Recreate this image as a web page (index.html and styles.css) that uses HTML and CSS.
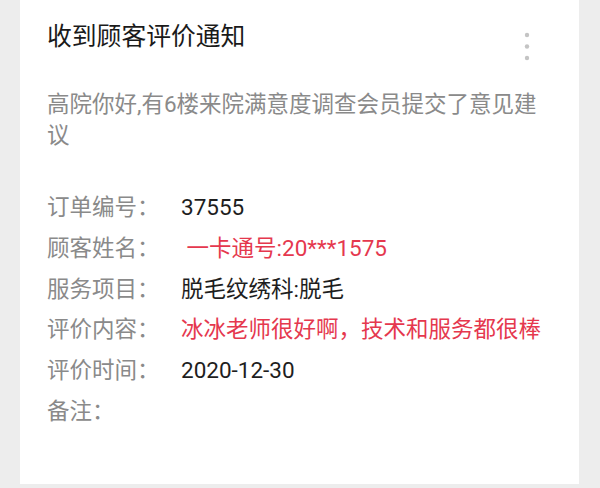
FILE: index.html
```html
<!DOCTYPE html>
<html lang="zh-CN">
<head>
<meta charset="utf-8">
<link rel="stylesheet" href="styles.css">
</head>
<body>
<div class="card">
  <div class="header">
    <div class="title">收到顾客评价通知</div>
    <svg class="more" width="6" height="30" viewBox="0 0 6 30">
      <circle cx="3" cy="3" r="2.2" fill="#c4c4c4"/>
      <circle cx="3" cy="14.5" r="2.2" fill="#c4c4c4"/>
      <circle cx="3" cy="26" r="2.2" fill="#c4c4c4"/>
    </svg>
  </div>
  <p class="desc">高院你好,有6楼来院满意度调查会员提交了意见建议</p>
  <div class="rows">
    <div class="row"><span class="label">订单编号：</span><span class="value">37555</span></div>
    <div class="row"><span class="label">顾客姓名：</span><span class="value red">&nbsp;一卡通号:20***1575</span></div>
    <div class="row"><span class="label">服务项目：</span><span class="value">脱毛纹绣科:脱毛</span></div>
    <div class="row"><span class="label">评价内容：</span><span class="value red">冰冰老师很好啊，技术和服务都很棒</span></div>
    <div class="row"><span class="label">评价时间：</span><span class="value">2020-12-30</span></div>
    <div class="row"><span class="label">备注：</span><span class="value"></span></div>
  </div>
</div>
</body>
</html>
```
FILE: styles.css
```css
html, body {
  margin: 0;
  padding: 0;
}
body {
  background: #ededed;
  font-family: Roboto, "Noto Sans CJK SC", sans-serif;
  height: 488px;
  overflow: hidden;
}
.card {
  background: #ffffff;
  margin: 0 21px 0 20px;
  height: 484px;
  box-sizing: border-box;
  padding: 20px 26px 0 27px;
}
.header {
  display: flex;
  justify-content: space-between;
  align-items: flex-start;
  height: 34px;
}
.title {
  font-size: 24.8px;
  line-height: 34px;
  color: #1a1a1a;
}
.more {
  flex: none;
  margin-top: 12px;
  margin-right: 23px;
}
.desc {
  margin: 35px 0 0 0;
  font-size: 22.5px;
  line-height: 31px;
  color: #8a8a8a;
}
.rows {
  margin-top: 36px;
}
.row {
  display: flex;
  font-size: 22.5px;
  line-height: 40.8px;
  height: 40.8px;
}
.label {
  width: 134px;
  flex: none;
  color: #8a8a8a;
}
.value {
  color: #1e1e1e;
}
.red {
  color: #e5384e;
}
```
